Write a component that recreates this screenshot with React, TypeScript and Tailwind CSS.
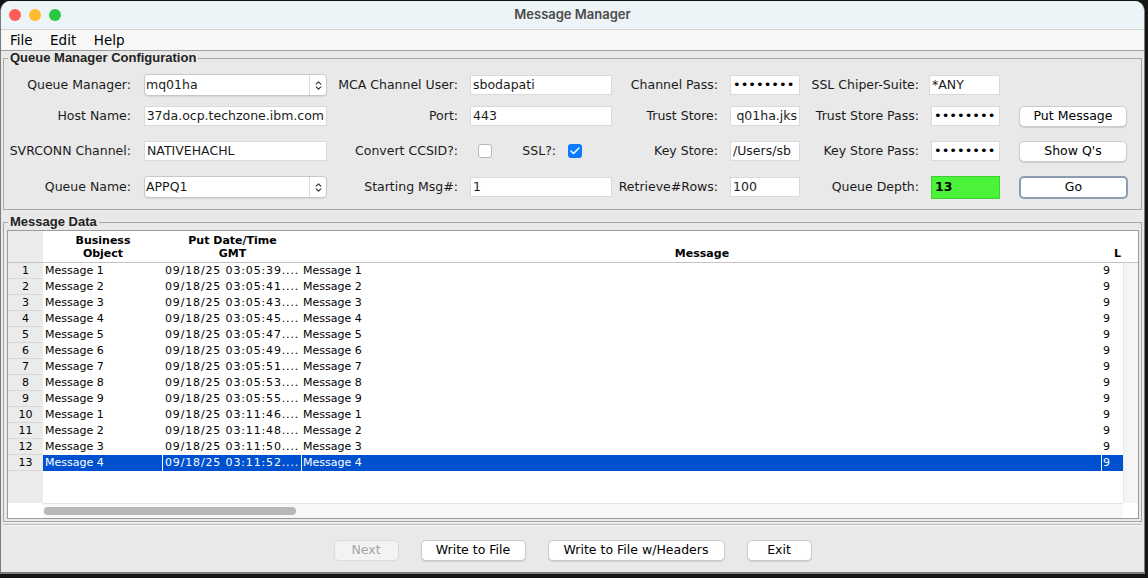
import { Check, ChevronsUpDown } from "lucide-react";
import type { ReactNode } from "react";

// rows of the message table: business object, put date/time, message
const messages: [string, string, string][] = [
  ["Message 1", "09/18/25 03:05:39....", "Message 1"],
  ["Message 2", "09/18/25 03:05:41....", "Message 2"],
  ["Message 3", "09/18/25 03:05:43....", "Message 3"],
  ["Message 4", "09/18/25 03:05:45....", "Message 4"],
  ["Message 5", "09/18/25 03:05:47....", "Message 5"],
  ["Message 6", "09/18/25 03:05:49....", "Message 6"],
  ["Message 7", "09/18/25 03:05:51....", "Message 7"],
  ["Message 8", "09/18/25 03:05:53....", "Message 8"],
  ["Message 9", "09/18/25 03:05:55....", "Message 9"],
  ["Message 1", "09/18/25 03:11:46....", "Message 1"],
  ["Message 2", "09/18/25 03:11:48....", "Message 2"],
  ["Message 3", "09/18/25 03:11:50....", "Message 3"],
  ["Message 4", "09/18/25 03:11:52....", "Message 4"],
];

const SELECTED = 12;

function Label({ w, children }: { w: string; children: ReactNode }) {
  return <div className={`${w} shrink-0 text-right whitespace-nowrap`}>{children}</div>;
}

function Field({ className, children }: { className: string; children?: ReactNode }) {
  return (
    <div
      className={`${className} h-[20px] shrink-0 flex items-center overflow-hidden whitespace-nowrap bg-white border border-[#dadada] px-[2px]`}
    >
      {children}
    </div>
  );
}

function Dots() {
  return <span className="text-[13px] text-black">••••••••</span>;
}

function Combo({ value }: { value: string }) {
  return (
    <div className="ml-[13px] w-[183px] h-[22px] shrink-0 flex rounded-[4px] border border-[#c8c8c8] bg-white shadow-[0_1px_1px_rgba(0,0,0,0.08)]">
      <div className="flex-1 flex items-center pl-[1px]">{value}</div>
      <div className="w-[17px] flex items-center justify-center border-l border-[#dddddd]">
        <ChevronsUpDown size={11} strokeWidth={2.5} className="text-[#333]" />
      </div>
    </div>
  );
}

function Btn({ children, go }: { children: ReactNode; go?: boolean }) {
  return (
    <button
      className={
        go
          ? "ml-[19px] w-[109px] h-[23px] shrink-0 rounded-[5px] border-2 border-[#8e9cb2] bg-white text-[12.5px] text-black"
          : "ml-[19px] w-[108px] h-[21px] shrink-0 rounded-[5px] border border-[#cbcbcb] bg-white text-[12.5px] text-black shadow-[0_1px_1px_rgba(0,0,0,0.12)]"
      }
    >
      {children}
    </button>
  );
}

function Box({ checked }: { checked?: boolean }) {
  return checked ? (
    <div className="ml-[12px] w-[14px] h-[14px] shrink-0 rounded-[3px] bg-[#0b7bff] flex items-center justify-center">
      <Check size={12} strokeWidth={3} className="text-white" />
    </div>
  ) : (
    <div className="ml-[20px] w-[14px] h-[14px] shrink-0 rounded-[3px] border border-[#b8b8b8] bg-white" />
  );
}

export default function App() {
  return (
    <div className="w-[1148px] h-[578px] bg-[#151515] pt-[1px] font-['DejaVu_Sans',sans-serif] text-[12.5px] text-[#1b1b1b]">
      <div className="w-[1145px] rounded-t-[10px] overflow-hidden border-x border-b-2 border-[#7b7b7b] bg-[#e9e9e9]">
        {/* title bar */}
        <div className="h-[29px] grid grid-cols-[1fr_auto_1fr] items-center bg-[#edf4f7] border-b border-[#d3d3d3]">
          <div className="flex gap-[8px] pl-[8px]">
            <div className="w-[12px] h-[12px] rounded-full bg-[#fe5f57]" />
            <div className="w-[12px] h-[12px] rounded-full bg-[#febc2e]" />
            <div className="w-[12px] h-[12px] rounded-full bg-[#28c840]" />
          </div>
          <div className="font-['Inter',sans-serif] font-semibold text-[13px] text-[#4b4b4b]">Message Manager</div>
          <div />
        </div>

        {/* menu */}
        <div className="h-[21px] flex items-center gap-[17.5px] pl-[9px] bg-[#f7f7f7] border-b border-[#9e9e9e] text-[13.5px] text-black">
          <span>File</span>
          <span>Edit</span>
          <span>Help</span>
        </div>

        <div className="h-[521px] flex flex-col px-[2px]">
          {/* Queue Manager Configuration */}
          <fieldset className="border border-[#a8a8a8] pb-[11px]">
            <legend className="ml-[4px] px-[2px] font-['Liberation_Sans',sans-serif] font-bold text-[13px] leading-[14px] text-[#222]">
              Queue Manager Configuration
            </legend>

            <div className="mt-[9px] flex h-[22px] items-center">
              <Label w="w-[127px]">Queue Manager:</Label>
              <Combo value="mq01ha" />
              <Label w="w-[131px]">MCA Channel User:</Label>
              <Field className="ml-[12px] w-[142px]">sbodapati</Field>
              <Label w="w-[106px]">Channel Pass:</Label>
              <Field className="ml-[12px] w-[70px]">
                <Dots />
              </Field>
              <Label w="w-[119px]">SSL Chiper-Suite:</Label>
              <Field className="ml-[10px] w-[71px]">*ANY</Field>
            </div>

            <div className="mt-[9px] flex h-[22px] items-center">
              <Label w="w-[127px]">Host Name:</Label>
              <Field className="ml-[13px] w-[183px] justify-end">37da.ocp.techzone.ibm.com</Field>
              <Label w="w-[131px]">Port:</Label>
              <Field className="ml-[12px] w-[142px]">443</Field>
              <Label w="w-[106px]">Trust Store:</Label>
              <Field className="ml-[12px] w-[70px] justify-end">q01ha.jks</Field>
              <Label w="w-[119px]">Trust Store Pass:</Label>
              <Field className="ml-[12px] w-[69px]">
                <Dots />
              </Field>
              <Btn>Put Message</Btn>
            </div>

            <div className="mt-[13px] flex h-[22px] items-center">
              <Label w="w-[127px]">SVRCONN Channel:</Label>
              <Field className="ml-[13px] w-[183px]">NATIVEHACHL</Field>
              <Label w="w-[131px]">Convert CCSID?:</Label>
              <Box />
              <Label w="w-[64px]">SSL?:</Label>
              <Box checked />
              <Label w="w-[136px]">Key Store:</Label>
              <Field className="ml-[12px] w-[70px]">/Users/sb</Field>
              <Label w="w-[119px]">Key Store Pass:</Label>
              <Field className="ml-[12px] w-[69px]">
                <Dots />
              </Field>
              <Btn>Show Q's</Btn>
            </div>

            <div className="mt-[14px] flex h-[22px] items-center">
              <Label w="w-[127px]">Queue Name:</Label>
              <Combo value="APPQ1" />
              <Label w="w-[131px]">Starting Msg#:</Label>
              <Field className="ml-[12px] w-[142px]">1</Field>
              <Label w="w-[106px]">Retrieve#Rows:</Label>
              <Field className="ml-[12px] w-[70px]">100</Field>
              <Label w="w-[119px]">Queue Depth:</Label>
              <div className="ml-[12px] w-[69px] h-[23px] shrink-0 flex items-center px-[3px] bg-[#4cf33b] border border-[#3fcf31] font-bold text-black">
                13
              </div>
              <Btn go>Go</Btn>
            </div>
          </fieldset>

          {/* Message Data */}
          <fieldset className="mt-[5px] border border-[#a8a8a8] pb-[2px]">
            <legend className="ml-[4px] px-[2px] font-['Liberation_Sans',sans-serif] font-bold text-[13px] leading-[14px] text-[#222]">
              Message Data
            </legend>

            <div className="mt-[1px] ml-[3px] mr-[2px] border border-[#9a9a9a] bg-white text-[11px] text-black">
              {/* header */}
              <div className="h-[32px] flex border-b border-[#c4c4c4] font-bold leading-[13px]">
                <div className="w-[35px] bg-[#ebebeb]" />
                <div className="w-[120px] flex flex-col items-center justify-end pb-[2px]">
                  <span>Business</span>
                  <span>Object</span>
                </div>
                <div className="w-[139px] flex flex-col items-center justify-end pb-[2px]">
                  <span>Put Date/Time</span>
                  <span>GMT</span>
                </div>
                <div className="w-[800px] flex items-end justify-center pb-[2px]">Message</div>
                <div className="w-[21px] flex items-end pb-[2px] pl-[12px]">L</div>
                <div className="flex-1" />
              </div>

              {/* rows */}
              {messages.map(([obj, date, msg], i) => {
                const sel = i === SELECTED;
                const cell = sel ? "bg-[#0051d0] text-white border-r border-white" : "";
                return (
                  <div key={i} className="h-[16px] flex leading-[16px] whitespace-nowrap">
                    <div className="w-[35px] bg-[#ebebeb] border-b border-[#d8d8d8] text-center">{i + 1}</div>
                    <div className={`w-[120px] pl-[2px] overflow-hidden ${cell}`}>{obj}</div>
                    <div className={`w-[139px] pl-[2px] overflow-hidden tracking-[0.85px] ${cell}`}>{date}</div>
                    <div className={`w-[800px] pl-[1px] overflow-hidden ${cell}`}>{msg}</div>
                    <div className={`w-[21px] pl-[1px] ${sel ? "bg-[#0051d0] text-white" : ""}`}>9</div>
                    <div className="flex-1 bg-[#f5f5f5] border-l border-[#e6e6e6]" />
                  </div>
                );
              })}

              {/* empty area */}
              <div className="h-[32px] flex">
                <div className="w-[35px] bg-[#ebebeb]" />
                <div className="w-[1080px]" />
                <div className="flex-1 bg-[#f5f5f5] border-l border-[#e6e6e6]" />
              </div>

              {/* horizontal scrollbar */}
              <div className="h-[15px] flex">
                <div className="w-[35px]" />
                <div className="w-[1080px] flex items-center bg-[#f8f8f8] border-t border-[#e4e4e4]">
                  <div className="ml-[1px] w-[252px] h-[8px] rounded-full bg-[#b7b7b7]" />
                </div>
                <div className="flex-1" />
              </div>
            </div>
          </fieldset>

          {/* bottom buttons */}
          <div className="mt-[2px] h-[1px] bg-[#bdbdbd]" />
          <div className="h-[1px] bg-[#f7f7f7]" />
          <div className="flex-1 flex justify-center gap-[22px] pt-[14px]">
            <button className="w-[65px] h-[21px] rounded-[5px] border border-[#dadada] bg-[#f3f3f3] text-[12.5px] text-[#a3a3a3]">
              Next
            </button>
            <button className="w-[105px] h-[21px] rounded-[5px] border border-[#cbcbcb] bg-white text-[12.5px] text-black shadow-[0_1px_1px_rgba(0,0,0,0.12)]">
              Write to File
            </button>
            <button className="w-[177px] h-[21px] rounded-[5px] border border-[#cbcbcb] bg-white text-[12.5px] text-black shadow-[0_1px_1px_rgba(0,0,0,0.12)]">
              Write to File w/Headers
            </button>
            <button className="w-[65px] h-[21px] rounded-[5px] border border-[#cbcbcb] bg-white text-[12.5px] text-black shadow-[0_1px_1px_rgba(0,0,0,0.12)]">
              Exit
            </button>
          </div>
        </div>
      </div>
    </div>
  );
}
